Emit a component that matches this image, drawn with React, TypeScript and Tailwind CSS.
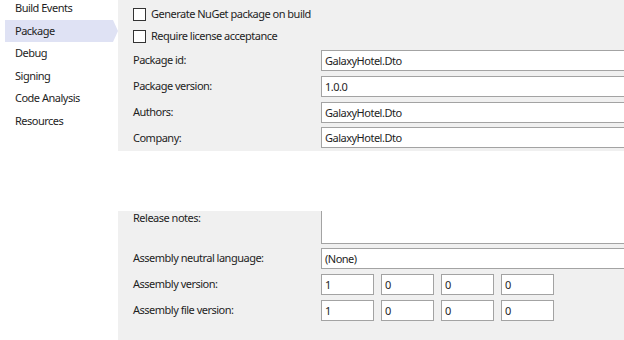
import React from "react";

const font = { fontFamily: '"Noto Sans", "Open Sans", sans-serif', letterSpacing: "-0.5px" };

function Box({ value, className = "" }: { value: string; className?: string }) {
  return (
    <div
      className={`h-[21px] border border-[#a3a3a3] bg-white pl-[3px] text-[11px] leading-[19px] text-[#1e1e1e] ${className}`}
    >
      {value}
    </div>
  );
}

function CheckRow({ label }: { label: string }) {
  return (
    <div className="flex h-[22px] items-center gap-[5px]">
      <div className="h-[13px] w-[13px] border border-[#333] bg-white" />
      <span className="text-[11px] text-[#1e1e1e]">{label}</span>
    </div>
  );
}

function Row({ label, children }: { label: string; children: React.ReactNode }) {
  return (
    <div className="flex items-center">
      <div className="w-[188px] shrink-0 text-[11px] text-[#1e1e1e]">{label}</div>
      <div className="flex-1">{children}</div>
    </div>
  );
}

const nav = ["Build Events", "Package", "Debug", "Signing", "Code Analysis", "Resources"];

export default function App() {
  return (
    <div className="flex h-[340px] w-[624px] overflow-hidden bg-white" style={font}>
      <div className="w-[118px] shrink-0 pl-[5px]">
        <div className="-mt-[3px] flex flex-col">
          {nav.map((n) => (
            <div
              key={n}
              className={`relative flex h-[22.5px] items-center pl-[10px] text-[11px] text-[#1e1e1e] ${
                n === "Package" ? "mr-[5px] bg-[#dfe2f4]" : ""
              }`}
            >
              {n}
              {n === "Package" && (
                <div className="absolute right-[-5px] top-1/2 h-0 w-0 -translate-y-1/2 border-y-[11px] border-l-[5px] border-y-transparent border-l-[#dfe2f4]" />
              )}
            </div>
          ))}
        </div>
      </div>
      <div className="flex flex-1 flex-col">
        <div className="h-[151px] bg-[#f0f0f0] pl-[15px] pt-[3px]">
          <CheckRow label="Generate NuGet package on build" />
          <CheckRow label="Require license acceptance" />
          <div className="mt-[3px] flex flex-col gap-[4.8px]">
            <Row label="Package id:">
              <Box value="GalaxyHotel.Dto" className="border-r-0" />
            </Row>
            <Row label="Package version:">
              <Box value="1.0.0" className="border-r-0" />
            </Row>
            <Row label="Authors:">
              <Box value="GalaxyHotel.Dto" className="border-r-0" />
            </Row>
            <Row label="Company:">
              <Box value="GalaxyHotel.Dto" className="border-r-0" />
            </Row>
          </div>
        </div>
        <div className="h-[60px]" />
        <div className="flex-1 bg-[#f0f0f0] pl-[15px]">
          <div className="flex">
            <div className="w-[188px] shrink-0 text-[11px] leading-[14px] text-[#1e1e1e]">Release notes:</div>
            <div className="h-[33px] flex-1 border-b border-l border-[#a3a3a3] bg-white" />
          </div>
          <div className="mt-[4px] flex flex-col gap-[5px]">
            <Row label="Assembly neutral language:">
              <Box value="(None)" className="border-r-0" />
            </Row>
            <Row label="Assembly version:">
              <div className="flex gap-[7px]">
                {["1", "0", "0", "0"].map((v, i) => (
                  <Box key={i} value={v} className="w-[53px]" />
                ))}
              </div>
            </Row>
            <Row label="Assembly file version:">
              <div className="flex gap-[7px]">
                {["1", "0", "0", "0"].map((v, i) => (
                  <Box key={i} value={v} className="w-[53px]" />
                ))}
              </div>
            </Row>
          </div>
        </div>
      </div>
    </div>
  );
}
